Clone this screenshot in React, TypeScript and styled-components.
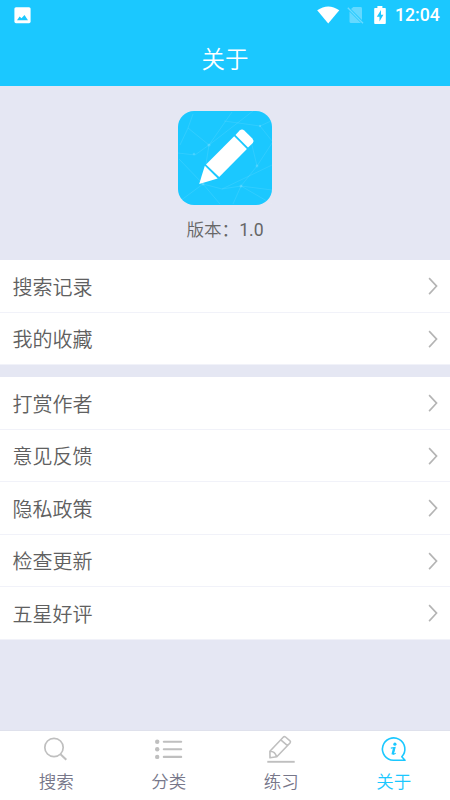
import React from 'react';
import styled, { createGlobalStyle } from 'styled-components';

const Global = createGlobalStyle`
  * { box-sizing: border-box; }
  body { margin: 0; background: #e5e7f3; font-family: Roboto, "Noto Sans CJK SC DemiLight", "Noto Sans CJK SC", sans-serif; }
  svg { display: block; flex: none; }
`;

const Screen = styled.div`
  width: 450px;
  height: 800px;
  display: flex;
  flex-direction: column;
  overflow: hidden;
  background: #e5e7f3;
`;

const Header = styled.header`
  height: 86px;
  flex: none;
  background: #1bc8ff;
  color: #fff;
`;

const StatusBar = styled.div`
  height: 30px;
  display: flex;
  align-items: center;
  justify-content: space-between;
  padding: 0 9px 0 14px;
`;

const StatusIcons = styled.div`
  display: flex;
  align-items: center;
`;

const Clock = styled.span`
  width: 46px;
  margin-left: 9px;
  font-size: 17.7px;
  line-height: 30px;
  font-weight: 500;
  white-space: nowrap;
`;

const Title = styled.h1`
  margin: 0;
  height: 56px;
  line-height: 60px;
  text-align: center;
  font-size: 23.5px;
  font-weight: 350;
`;

const Hero = styled.section`
  height: 174px;
  flex: none;
  padding-top: 25px;
  display: flex;
  flex-direction: column;
  align-items: center;
`;

const Version = styled.div`
  margin-top: 11px;
  font-size: 17.6px;
  font-weight: 350;
  line-height: 28px;
  color: #666;
`;

const VersionNumber = styled.span`
  font-weight: 400;
`;

const Group = styled.section`
  flex: none;
  background: #fff;
  margin-bottom: 12px;
`;

const Row = styled.div`
  height: 52.5px;
  display: flex;
  align-items: center;
  justify-content: space-between;
  padding: 0.5px 12px 0 12.5px;
  color: #606060;
  font-size: 20px;
  font-weight: 350;
  border-bottom: 1px solid #f1f2f9;
`;

const TabBar = styled.nav`
  height: 69px;
  margin-top: auto;
  flex: none;
  display: grid;
  grid-template-columns: repeat(4, 1fr);
  background: #fff;
  box-shadow: 0 -1px 0 #dfe1ec;
`;

const Tab = styled.div<{ $active?: boolean }>`
  display: flex;
  flex-direction: column;
  align-items: center;
  padding-top: 2px;
  font-size: 17.5px;
  font-weight: 350;
  line-height: 26px;
  color: ${p => (p.$active ? '#1bc8ff' : '#77778a')};
  svg {
    margin-bottom: 4px;
    color: ${p => (p.$active ? '#1bc8ff' : '#bfbfbf')};
  }
`;

const AppIcon = () => (
  <svg width="94" height="94" viewBox="0 0 94 94">
    <rect width="94" height="94" rx="16" fill="#1bc8ff" />
    <g fill="none" stroke="#fff" strokeOpacity=".12" strokeWidth=".8">
      <path d="M15 3 10 17 2 34M10 17 31 34 54 1M31 34 28 53M31 34 75 0M46 10 82 15 93 10M82 15 94 30M1 48 25 73 44 78 94 54M25 73 2 90M25 73 42 93M44 78 63 75 94 79M63 75 94 93M63 75 55 93M63 75 79 55 73 30M79 55 94 32M0 42 17 44 31 34" />
    </g>
    <g fill="#fff" fillOpacity=".16">
      <circle cx="16" cy="43" r="1.3" /><circle cx="31" cy="34" r="1.6" />
      <circle cx="82" cy="15" r="1.2" /><circle cx="63" cy="75" r="1.5" />
      <circle cx="79" cy="55" r="1.4" /><circle cx="25" cy="73" r="1.5" />
    </g>
    <g fill="#fff">
      <path d="M57.5 24 61.6 19.6Q64 17.6 66.3 19.6L74.4 27.4Q76.4 29.6 74.8 32L70 36.6Z" />
      <path d="M56.2 25.3 68.9 37.9 41.2 66.1 28 53.5Z" />
      <path d="M26.8 54.8 39.7 67.5 21.2 73Z" />
    </g>
  </svg>
);

const Chevron = () => (
  <svg width="10" height="18" viewBox="0 0 10 18" fill="none" stroke="#b4b4b4" strokeWidth="1.6">
    <path d="M1.1 1.1 8.6 9.1 1.1 17.1" />
  </svg>
);

const PictureIcon = () => (
  <svg width="17" height="17" viewBox="0 0 17 17">
    <rect x=".4" y=".2" width="16.2" height="16" rx="1.6" fill="#fff" />
    <path d="M3 13.2 5.6 9.4 7.5 11.3 10.5 7.9 14 13.2Z" fill="#1bc8ff" />
  </svg>
);

const WifiIcon = () => (
  <svg width="23" height="18" viewBox="0 0 23 18">
    <path d="M.2 4.3Q11.2-3.4 22.3 4.3L11.2 17.5Z" fill="#fff" />
  </svg>
);

const NoSimIcon = () => (
  <svg width="17" height="18" viewBox="0 0 17 18">
    <path d="M6.3 1H13.6Q15 1 15 2.4V14L4 3.1ZM2.5 5.5 14 17H4Q2.5 17 2.5 15.5Z" fill="#fff" fillOpacity=".32" />
    <path d="M.8 1.8 16 17.3" stroke="#fff" strokeOpacity=".35" strokeWidth="1.3" />
  </svg>
);

const BatteryIcon = () => (
  <svg width="12" height="18" viewBox="0 0 12 18">
    <path d="M3.4 0H8.4V2H11Q11.8 2 11.8 2.8V17Q11.8 18 11 18H1Q.2 18 .2 17V2.8Q.2 2 1 2H3.4Z" fill="#fff" />
    <path d="M7 4 2.8 10.8H5.5V15.5L9.4 8.8H7Z" fill="#1bc8ff" />
  </svg>
);

const Gap = styled.span<{ $w: number }>`
  width: ${p => p.$w}px;
`;

const SearchIcon = () => (
  <svg width="32" height="32" viewBox="0 0 32 32" fill="none" stroke="currentColor" strokeWidth="1.7">
    <circle cx="14" cy="14.5" r="9.2" />
    <path d="M20.5 21.2 26.3 26.8" strokeWidth="2" />
  </svg>
);

const ListIcon = () => (
  <svg width="32" height="32" viewBox="0 0 32 32" fill="currentColor" stroke="currentColor">
    <g stroke="none"><circle cx="4.2" cy="8.8" r="2.2" /><circle cx="4.2" cy="16.3" r="2.2" /><circle cx="4.2" cy="23.9" r="2.2" /></g>
    <path d="M10.8 8.8H28.2M10.8 16.3H28.2M10.8 23.9H28.2" strokeWidth="2.1" strokeLinecap="round" />
  </svg>
);

const PracticeIcon = () => (
  <svg width="32" height="32" viewBox="0 0 32 32" fill="none" stroke="currentColor" strokeWidth="1.6" strokeLinejoin="round">
    <path d="M4.9 18.2 18.2 4.2Q19.3 3 20.5 4L25 7.8Q26 8.8 25 10L11.8 23.8 5 24.8ZM15.8 6.8 22.5 12.6M5 18.2Q10.2 18.2 11.5 23.8" />
    <path d="M2.3 28.8H29.7" strokeWidth="1.9" />
  </svg>
);

const InfoIcon = () => (
  <svg width="32" height="32" viewBox="0 0 32 32" fill="none" stroke="currentColor" strokeWidth="1.6">
    <path d="M27 27.3H15.3A11.2 11.2 0 1 1 23.8 23.8L27 27.3Z" strokeLinejoin="round" />
    <circle cx="16.9" cy="11.2" r="1.6" fill="currentColor" stroke="none" />
    <path d="M12.8 15.1 17 14.5 15.3 20.6Q15.3 21.7 17.7 20.3" strokeWidth="1.2" />
    <path d="M16.1 14.8 14.5 21.6" strokeWidth="2.1" />
  </svg>
);

const groups = [
  ['搜索记录', '我的收藏'],
  ['打赏作者', '意见反馈', '隐私政策', '检查更新', '五星好评'],
];

export default function App() {
  return (
    <Screen>
      <Global />
      <Header>
        <StatusBar>
          <PictureIcon />
          <StatusIcons>
            <WifiIcon />
            <Gap $w={7} />
            <NoSimIcon />
            <Gap $w={10} />
            <BatteryIcon />
            <Clock>12:04</Clock>
          </StatusIcons>
        </StatusBar>
        <Title>关于</Title>
      </Header>
      <Hero>
        <AppIcon />
        <Version>版本：<VersionNumber>1.0</VersionNumber></Version>
      </Hero>
      {groups.map(items => (
        <Group key={items[0]}>
          {items.map(label => (
            <Row key={label}>
              {label}
              <Chevron />
            </Row>
          ))}
        </Group>
      ))}
      <TabBar>
        <Tab><SearchIcon />搜索</Tab>
        <Tab><ListIcon />分类</Tab>
        <Tab><PracticeIcon />练习</Tab>
        <Tab $active><InfoIcon />关于</Tab>
      </TabBar>
    </Screen>
  );
}
